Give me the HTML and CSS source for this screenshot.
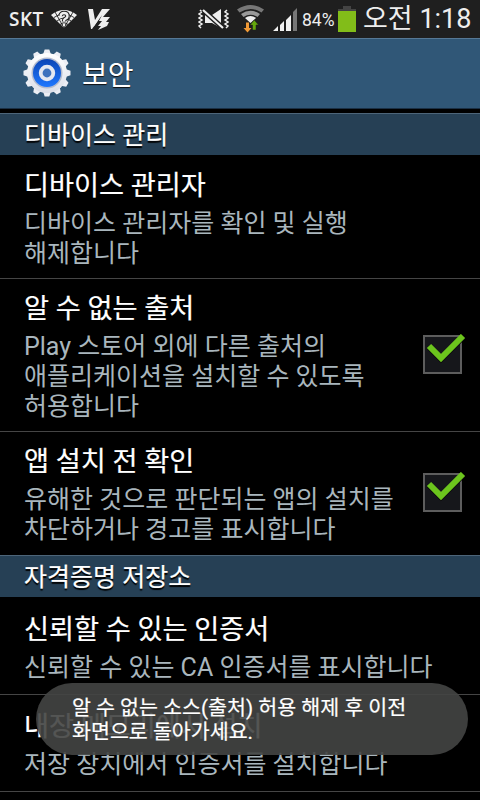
FILE: index.html
```html
<!DOCTYPE html>
<html lang="ko">

	<head>
		<meta charset="UTF-8">
		<title>보안</title>
		<link rel="stylesheet" href="styles.css">
	</head>

	<body>
		<div id="status">
			<span class="carrier">SKT</span>
			<svg class="wifi-ask" width="26" height="20" viewBox="0 0 26 20">
				<path d="M0 6Q13 -4 26 6L13 19Z" fill="#eee" />
				<path d="M3 8.500Q13 1 23 8.500M6 12Q13 6 20 12M9 15.500Q13 12 17 15.500M4 3L13 19L22 3" fill="none" stroke="#1f1f1f" stroke-width="0.900" />
				<path d="M9.500 7Q10 4 13 4Q16.500 4 16.500 7Q16.500 9 14 10Q13 10.500 13 12.500M13 14.500V17" fill="none" stroke="#1f1f1f" stroke-width="4.500" />
				<path d="M9.500 7Q10 4 13 4Q16.500 4 16.500 7Q16.500 9 14 10Q13 10.500 13 12.500M13 14.500V17" fill="none" stroke="#eee" stroke-width="2.400" />
			</svg>
			<svg class="v3" width="24" height="22" viewBox="0 0 24 22">
				<path d="M0 0H5L7 11L14 0H22L15 8H22L18 13H21L19 17L10 21L13 17H10L14 12H11L14 6L4 20H3Z" fill="#eee" />
				<path d="M15 2L5 17" fill="none" stroke="#eee" stroke-width="2" />
			</svg>
			<svg class="mute" width="31" height="20" viewBox="0 0 31 20">
				<path d="M2 1L4 3L1 5L4 7L1 9L4 11L1 13L4 15L1 17L3 19M29 1L27 3L30 5L27 7L30 9L27 11L30 13L27 15L30 17L28 19" fill="none" stroke="#eee" stroke-width="1.500" />
				<path d="M7 6H14L23 0V19L14 14H7Z" fill="#eee" />
				<path d="M5 1L25 19" stroke="#1f1f1f" stroke-width="5" />
				<path d="M5 1L25 19" stroke="#eee" stroke-width="2.200" />
			</svg>
			<svg class="wifi" width="27" height="28" viewBox="0 0 27 28">
				<path d="M0 4.500Q13.500 -4.500 27 4.500L24.500 7.500Q13.500 0.500 2.500 7.500Z" fill="#777" />
				<path d="M4 9Q13.500 2.500 23 9L20.500 12Q13.500 7.500 6.500 12Z" fill="#999" />
				<path d="M8 13Q13.500 9 19 13L13.500 18Z" fill="#eee" />
				<path d="M9 17.500H12V23H14.500L10.500 27.500L6.500 23H9Z" fill="#f19a36" />
				<path d="M15.500 25V20H13L17.300 15L21.500 20H19V25Z" fill="#65a80d" stroke="#1f1f1f" stroke-width="0.500" />
			</svg>
			<svg class="signal" width="25" height="24" viewBox="0 0 25 24">
				<path d="M0 23L5 18V23ZM7 17L11 13V23H7ZM13 12L18 7V23H13Z" fill="#f2f2f2" />
				<path d="M20 4L24 0V23H20Z" fill="#777" />
			</svg>
			<span class="percent">84%</span>
			<div class="battery"></div>
			<span class="clock">오전 1:18</span>
		</div>
		<div id="bar">
			<svg width="48" height="48" viewBox="-24 -24 48 48">
				<defs>
					<linearGradient id="metal" x1="0" y1="0" x2="0" y2="1">
						<stop offset="0" stop-color="#fff" />
						<stop offset="1" stop-color="#dcdfe8" />
					</linearGradient>
					<linearGradient id="blue" x1="0" y1="0" x2="0" y2="1">
						<stop offset="0" stop-color="#0b45b5" />
						<stop offset="1" stop-color="#1f78ff" />
					</linearGradient>
					<path id="teeth" d="M-4.500 -17L-2.300 -23.500H2.300L4.500 -17V17L2.300 23.500H-2.300L-4.500 17Z" />
				</defs>
				<g fill="#eceef4">
					<use href="#teeth" />
					<use href="#teeth" transform="rotate(30)" />
					<use href="#teeth" transform="rotate(60)" />
					<use href="#teeth" transform="rotate(90)" />
					<use href="#teeth" transform="rotate(120)" />
					<use href="#teeth" transform="rotate(150)" />
				</g>
				<circle r="20" fill="url(#metal)" />
				<circle r="15.500" fill="#b4bccf" />
				<circle r="14" fill="url(#blue)" />
				<circle r="6.300" fill="#3d72bd" stroke="#e4e8f1" stroke-width="3.800" />
			</svg>
			<h1>보안</h1>
		</div>
		<h2>디바이스 관리</h2>
		<ul>
			<li>
				<div class="text">
					<h3>디바이스 관리자</h3>
					<p>디바이스 관리자를 확인 및 실행<br>해제합니다</p>
				</div>
			</li>
			<li>
				<div class="text">
					<h3>알 수 없는 출처</h3>
					<p>Play 스토어 외에 다른 출처의<br>애플리케이션을 설치할 수 있도록<br>허용합니다</p>
				</div>
				<svg class="check" width="43" height="41" viewBox="0 0 43 41">
					<rect x="1" y="2" width="37" height="37" fill="#16171b" stroke="#5d5d5d" stroke-width="2" />
					<path d="M6 13L18 25L40 3" fill="none" stroke="#0a0a0a" stroke-width="6" />
					<path d="M6 12L18 24L40 2" fill="none" stroke="#6cc51d" stroke-width="6" />
				</svg>
			</li>
			<li class="last">
				<div class="text">
					<h3>앱 설치 전 확인</h3>
					<p>유해한 것으로 판단되는 앱의 설치를<br>차단하거나 경고를 표시합니다</p>
				</div>
				<svg class="check" width="43" height="41" viewBox="0 0 43 41">
					<rect x="1" y="2" width="37" height="37" fill="#16171b" stroke="#5d5d5d" stroke-width="2" />
					<path d="M6 13L18 25L40 3" fill="none" stroke="#0a0a0a" stroke-width="6" />
					<path d="M6 12L18 24L40 2" fill="none" stroke="#6cc51d" stroke-width="6" />
				</svg>
			</li>
		</ul>
		<h2>자격증명 저장소</h2>
		<ul>
			<li class="single">
				<div class="text">
					<h3>신뢰할 수 있는 인증서</h3>
					<p>신뢰할 수 있는 CA 인증서를 표시합니다</p>
				</div>
			</li>
			<li class="single">
				<div class="text">
					<h3>내장 메모리에서 설치</h3>
					<p>저장 장치에서 인증서를 설치합니다</p>
				</div>
			</li>
		</ul>
		<div id="toast">알 수 없는 소스(출처) 허용 해제 후 이전<br>화면으로 돌아가세요.</div>
	</body>

</html>
```
FILE: styles.css
```css
* {
	box-sizing: border-box;
	margin: 0;
	padding: 0;
}

body {
	width: 480px;
	height: 800px;
	overflow: hidden;
	background: #000;
	color: #fff;
	font-family: Roboto, "Noto Sans CJK KR", sans-serif;
	white-space: nowrap;
}

svg {
	display: block;
	flex: none;
}

#status {
	display: flex;
	height: 38px;
	padding-left: 9px;
	background: #1f1f1f;
	color: #eee;
	line-height: 38px;
}

.carrier {
	width: 42px;
	font: 600 19px/38px "Open Sans", sans-serif;
	letter-spacing: 0.5px;
}

.wifi-ask {
	margin-top: 9px;
}

.v3 {
	margin: 9px 0 0 11px;
}

.mute {
	margin: 9px 0 0 86px;
}

.wifi {
	margin: 5px 0 0 8px;
}

.signal {
	margin: 8px 0 0 9px;
}

.percent {
	width: 36px;
	margin-left: 4px;
	font-size: 17.5px;
	line-height: 40px;
}

.battery {
	width: 18px;
	height: 26px;
	margin-top: 6px;
	background: linear-gradient(#444, #444) 5px 0 / 8px 3px no-repeat, linear-gradient(#444 2px, #82bd19 2px) 0 3px / 18px 23px no-repeat;
}

.clock {
	margin-left: 7px;
	font-size: 27px;
	line-height: 39px;
}

#bar {
	display: flex;
	align-items: center;
	height: 71px;
	padding-left: 23px;
	border-top: 1px solid #567895;
	border-bottom: 1px solid #1b3045;
	background: #305777;
}

#bar svg {
	margin-top: -1px;
}

h1 {
	margin: -2px 0 0 11px;
	font-size: 28px;
	font-weight: normal;
	text-shadow: 0 1px 1px #111;
}

h2 {
	height: 42px;
	padding-left: 24px;
	border-top: 1px solid #4d6579;
	background: #264055;
	font-size: 25px;
	font-weight: normal;
	line-height: 43px;
	text-shadow: 0 2px 1px #000;
	-webkit-text-stroke: 0.2px #fff;
}

#bar + h2 {
	margin-top: 4px;
}

ul {
	list-style: none;
}

li {
	display: flex;
	align-items: center;
	padding: 12px 14px 9px 24px;
	border-bottom: 1px solid #454545;
}

li:first-child {
	padding: 13px 14px 9px 24px;
}

.last {
	padding-bottom: 10px;
	border-bottom: 0;
}

li.single {
	padding: 14px 14px 11px 24px;
}

li.single:first-child {
	padding: 15px 14px 11px 24px;
}

.check {
	margin-top: -4px;
}

.text {
	flex: 1;
}

h3 {
	height: 41px;
	font-size: 27.2px;
	font-weight: normal;
	line-height: 36px;
	-webkit-text-stroke: 0.2px #fff;
}

p {
	color: #a9b6bd;
	font-size: 25px;
	line-height: 30px;
}

#toast {
	position: absolute;
	left: 36px;
	top: 683px;
	width: 432px;
	height: 72px;
	padding: 13px 36px;
	border-radius: 36px;
	background: rgba(67, 68, 67, 0.91);
	font-size: 20.6px;
	line-height: 24px;
	-webkit-text-stroke: 0.2px #fff;
}
```
